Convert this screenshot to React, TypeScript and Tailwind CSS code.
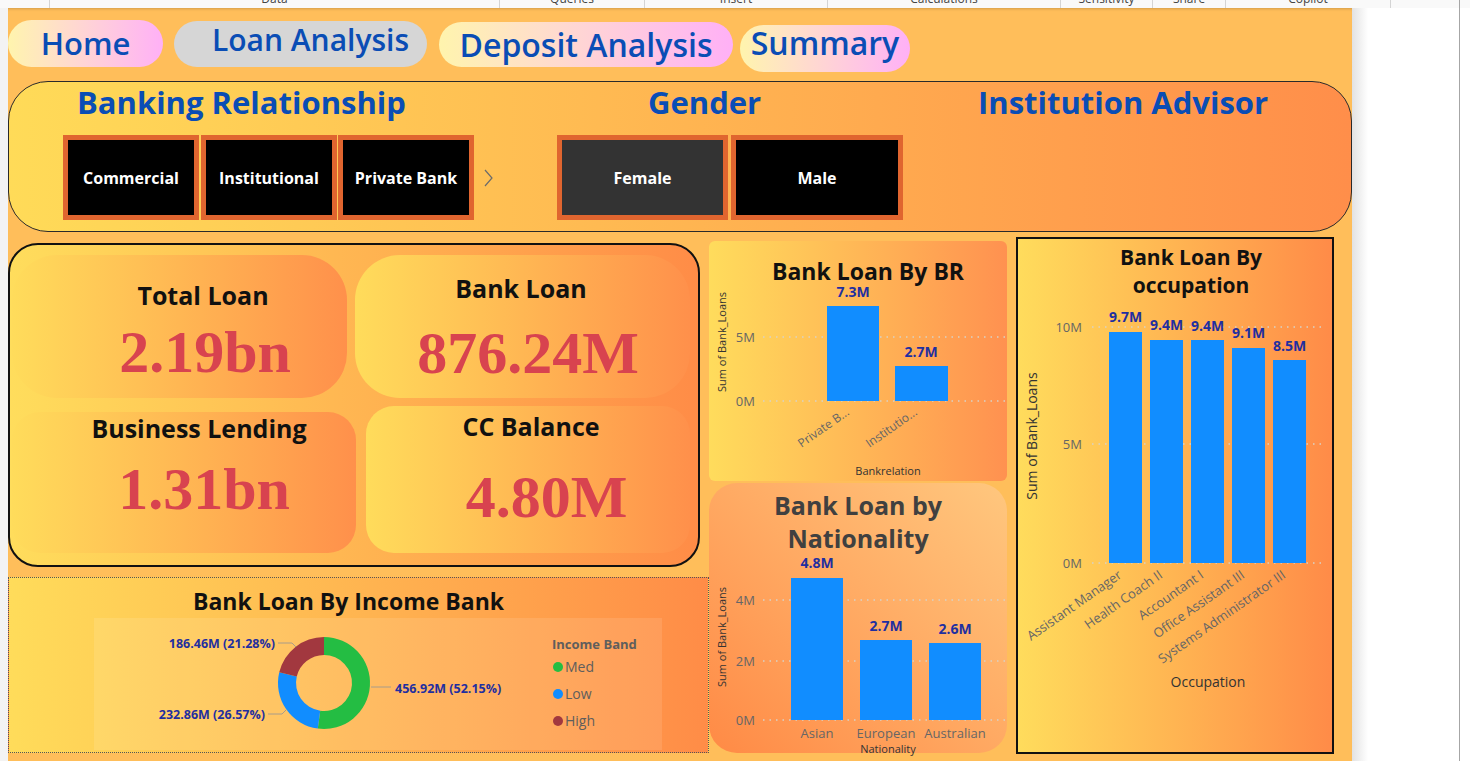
import React from "react";

const BLUE_BAR = "#118dff";
const LABEL_BLUE = "#1f2fa0";

function TopStrip() {
  return (
    <div className="h-[8px] flex bg-[#f9f9f9] overflow-hidden text-[12px] text-[#444] leading-[12px]">
      <div className="w-[50px] h-full border-r border-[#d4d4d4]" />
      <div className="w-[450px] h-full border-r border-[#d4d4d4] text-center"><div className="mt-[-7px]">Data</div></div>
      <div className="w-[145px] h-full border-r border-[#d4d4d4] text-center"><div className="mt-[-7px]">Queries</div></div>
      <div className="w-[183px] h-full border-r border-[#d4d4d4] text-center"><div className="mt-[-7px]">Insert</div></div>
      <div className="w-[233px] h-full border-r border-[#d4d4d4] text-center"><div className="mt-[-7px]">Calculations</div></div>
      <div className="w-[92px] h-full border-r border-[#d4d4d4] text-center"><div className="mt-[-7px]">Sensitivity</div></div>
      <div className="w-[73px] h-full border-r border-[#d4d4d4] text-center"><div className="mt-[-7px]">Share</div></div>
      <div className="w-[165px] h-full border-r border-[#d4d4d4] text-center"><div className="mt-[-7px]">Copilot</div></div>
      <div className="w-[69px] h-full border-r border-[#a6a6a6]" />
      <div className="flex-1 h-full" />
    </div>
  );
}

function Nav() {
  return (
    <div className="mt-[12px] h-[52px] flex items-start font-semibold text-[#0a4db5] leading-none">
      <div className="w-[155px] h-[47px] rounded-full bg-linear-to-r from-[#fff4ad] to-[#ffb0f6] flex items-center justify-center text-[31px]">
        Home
      </div>
      <div className="ml-[11px] mt-[1px] w-[253px] h-[46px] rounded-full bg-[#d6d6d6] flex items-center justify-center text-[30px] pl-[20px] pb-[8px]">
        Loan Analysis
      </div>
      <div className="ml-[12px] mt-[2px] w-[294px] h-[45px] rounded-full bg-linear-to-r from-[#fff4ad] to-[#ffb0f6] flex items-center justify-center text-[32px]">
        Deposit Analysis
      </div>
      <div className="ml-[7px] mt-[5px] w-[170px] h-[47px] rounded-full bg-linear-to-r from-[#fff4ad] to-[#ffb0f6] flex items-center justify-center text-[32px] pb-[12px]">
        Summary
      </div>
    </div>
  );
}

function Filter() {
  return (
    <div className="mt-[9px] h-[151px] rounded-[40px] border border-[#2a2a2a] bg-linear-to-r from-[#ffdb58] to-[#ff8e4a] flex flex-col">
      <div className="h-[40px] flex items-center text-[31px] font-bold text-[#0a4db5] leading-none whitespace-nowrap">
        <div className="w-[548px] pl-[68px]">Banking Relationship</div>
        <div className="w-[420px] pl-[91px]">Gender</div>
        <div className="pl-[1px]">Institution Advisor</div>
      </div>
      <div className="mt-[13px] flex items-center pl-[54px] text-white font-bold text-[16px]">
        <div className="w-[136px] h-[85px] border-[5px] border-[#e0652f] bg-black flex items-center justify-center">Commercial</div>
        <div className="ml-[2px] w-[136px] h-[85px] border-[5px] border-[#e0652f] bg-black flex items-center justify-center">Institutional</div>
        <div className="ml-[1px] w-[136px] h-[85px] border-[5px] border-[#e0652f] bg-black flex items-center justify-center">Private Bank</div>
        <svg className="ml-[9px]" width="10" height="18" viewBox="0 0 10 18">
          <polyline points="2,1 9,9 2,17" fill="none" stroke="#6b6b6b" strokeWidth="1.2" />
        </svg>
        <div className="ml-[64px] w-[171px] h-[85px] border-[5px] border-[#e0652f] bg-[#333333] flex items-center justify-center">Female</div>
        <div className="ml-[3px] w-[172px] h-[85px] border-[5px] border-[#e0652f] bg-black flex items-center justify-center">Male</div>
      </div>
    </div>
  );
}

function Kpis() {
  const val = "font-['Liberation_Serif',serif] font-bold text-[60px] leading-[60px] text-[#d8434f] whitespace-nowrap";
  const lab = "text-[25px] leading-[30px] font-bold text-[#111] whitespace-nowrap";
  return (
    <div className="mt-[6px] w-[692px] h-[324px] border-2 border-[#111] rounded-[30px] bg-linear-to-r from-[#ffdd5c] to-[#ff8c47] flex flex-col">
      <div className="mt-[10px] flex">
        <div className="ml-[2px] w-[335px] h-[143px] rounded-[45px] bg-linear-to-r from-[#ffdc5b] to-[#ff904b] flex flex-col text-center">
          <div className={`${lab} pt-[25px] pl-[47px]`}>Total Loan</div>
          <div className={`${val} mt-[12px] pl-[51px]`}>2.19bn</div>
        </div>
        <div className="ml-[8px] w-[335px] h-[143px] rounded-[45px] bg-linear-to-r from-[#ffdc5b] to-[#ff904b] flex flex-col text-center">
          <div className={`${lab} pt-[18px] pr-[3px]`}>Bank Loan</div>
          <div className={`${val} mt-[20px] pl-[11px]`}>876.24M</div>
        </div>
      </div>
      <div className="mt-[8px] flex items-start">
        <div className="ml-[2px] mt-[6px] w-[344px] h-[141px] rounded-[28px] bg-linear-to-r from-[#ffdc5b] to-[#ff904b] flex flex-col text-center">
          <div className={`${lab} pt-[1px] pl-[30px]`}>Business Lending</div>
          <div className={`${val} mt-[16px] pl-[40px]`}>1.31bn</div>
        </div>
        <div className="ml-[10px] w-[324px] h-[147px] rounded-[28px] bg-linear-to-r from-[#ffdc5b] to-[#ff904b] flex flex-col text-center">
          <div className={`${lab} pt-[5px] pl-[6px]`}>CC Balance</div>
          <div className={`${val} mt-[26px] pl-[37px]`}>4.80M</div>
        </div>
      </div>
    </div>
  );
}

function segPath(cx: number, cy: number, R: number, r: number, a0: number, a1: number) {
  const rad = (d: number) => (d * Math.PI) / 180;
  const p = (a: number, rr: number) => [cx + rr * Math.sin(rad(a)), cy - rr * Math.cos(rad(a))];
  const [x0, y0] = p(a0, R);
  const [x1, y1] = p(a1, R);
  const [x2, y2] = p(a1, r);
  const [x3, y3] = p(a0, r);
  const large = a1 - a0 > 180 ? 1 : 0;
  return `M${x0} ${y0} A${R} ${R} 0 ${large} 1 ${x1} ${y1} L${x2} ${y2} A${r} ${r} 0 ${large} 0 ${x3} ${y3} Z`;
}

function IncomeCard() {
  const cx = 230, cy = 65, R = 46, r = 28;
  return (
    <div className="mt-[10px] w-[701px] h-[176px] border border-dotted border-[#555] bg-linear-to-r from-[#ffdc5a] to-[#ff8c47] flex flex-col">
      <div className="pt-[8px] leading-[30px] text-[23px] font-bold text-[#111] text-center pr-[20px]">Bank Loan By Income Bank</div>
      <div className="ml-[85px] mt-[2px] w-[568px] h-[132px] bg-white/10">
        <svg width="568" height="132" className="block">
          <path d={segPath(cx, cy, R, r, 0, 187.74)} fill="#24bd43" />
          <path d={segPath(cx, cy, R, r, 187.74, 283.39)} fill="#118dff" />
          <path d={segPath(cx, cy, R, r, 283.39, 360)} fill="#a2383f" />
          <polyline points="184,25 198,25 202,29" fill="none" stroke="#a89c8a" strokeWidth="1" />
          <polyline points="277,69 297,69" fill="none" stroke="#a89c8a" strokeWidth="1" />
          <polyline points="174,96 188,96 192,92" fill="none" stroke="#a89c8a" strokeWidth="1" />
          <text x="181" y="29.5" textAnchor="end" fontSize="12.5" fontWeight="700" fill={LABEL_BLUE}>186.46M (21.28%)</text>
          <text x="301" y="74.5" textAnchor="start" fontSize="12.5" fontWeight="700" fill={LABEL_BLUE}>456.92M (52.15%)</text>
          <text x="171" y="100.5" textAnchor="end" fontSize="12.5" fontWeight="700" fill={LABEL_BLUE}>232.86M (26.57%)</text>
          <text x="458" y="30.5" fontSize="13" fontWeight="700" fill="#605e5c">Income Band</text>
          <circle cx="464" cy="49" r="5" fill="#24bd43" />
          <circle cx="464" cy="76" r="5" fill="#118dff" />
          <circle cx="464" cy="103" r="5" fill="#a2383f" />
          <text x="471" y="54" fontSize="14" fill="#605e5c">Med</text>
          <text x="471" y="81" fontSize="14" fill="#605e5c">Low</text>
          <text x="471" y="108" fontSize="14" fill="#605e5c">High</text>
        </svg>
      </div>
    </div>
  );
}

function BRCard() {
  return (
    <div className="mt-[4px] h-[240px] rounded-[6px] bg-linear-to-r from-[#ffdc5c] to-[#ff9150] flex flex-col">
      <div className="pt-[15px] leading-[30px] text-[23px] font-bold text-[#111] text-center pl-[20px]">Bank Loan By BR</div>
      <svg width="298" height="195" className="block overflow-visible">
        <text transform="translate(17,56) rotate(-90)" textAnchor="middle" fontSize="11" fill="#333">Sum of Bank_Loans</text>
        <line x1="54" y1="51" x2="298" y2="51" stroke="#d9d2c6" strokeWidth="1.5" strokeDasharray="1.5 5" />
        <line x1="54" y1="115" x2="298" y2="115" stroke="#d9d2c6" strokeWidth="1.5" strokeDasharray="1.5 5" />
        <text x="46" y="55.5" textAnchor="end" fontSize="13" fill="#666">5M</text>
        <text x="46" y="119.5" textAnchor="end" fontSize="13" fill="#666">0M</text>
        <rect x="118" y="20" width="52" height="95" fill={BLUE_BAR} />
        <rect x="186" y="80" width="53" height="35" fill={BLUE_BAR} />
        <text x="144" y="11" textAnchor="middle" fontSize="14" fontWeight="700" fill={LABEL_BLUE}>7.3M</text>
        <text x="212" y="71" textAnchor="middle" fontSize="14" fontWeight="700" fill={LABEL_BLUE}>2.7M</text>
        <text transform="translate(141,128) rotate(-35)" textAnchor="end" fontSize="12" fill="#666">Private B...</text>
        <text transform="translate(209,128) rotate(-35)" textAnchor="end" fontSize="12" fill="#666">Institutio...</text>
        <text x="179" y="189" textAnchor="middle" fontSize="11" fill="#333">Bankrelation</text>
      </svg>
    </div>
  );
}

function NatCard() {
  const bars = [
    { x: 82, y: 23, l: "4.8M", ly: 13, n: "Asian" },
    { x: 151, y: 85, l: "2.7M", ly: 76, n: "European" },
    { x: 220, y: 88, l: "2.6M", ly: 79, n: "Australian" },
  ];
  return (
    <div className="mt-[2px] h-[270px] rounded-[28px] bg-linear-to-tr from-[#ff8a45] to-[#ffc77e] flex flex-col">
      <div className="pt-[6px] leading-[33px] text-[25px] font-bold text-[#404040] text-center">
        Bank Loan by
        <br />
        Nationality
      </div>
      <svg width="298" height="198" className="block overflow-visible">
        <text transform="translate(17,82) rotate(-90)" textAnchor="middle" fontSize="11" fill="#333">Sum of Bank_Loans</text>
        {[45, 106, 165].map((y) => (
          <line key={y} x1="54" y1={y} x2="298" y2={y} stroke="#d9d2c6" strokeWidth="1.5" strokeDasharray="1.5 5" />
        ))}
        <text x="46" y="49.5" textAnchor="end" fontSize="13" fill="#666">4M</text>
        <text x="46" y="110.5" textAnchor="end" fontSize="13" fill="#666">2M</text>
        <text x="46" y="169.5" textAnchor="end" fontSize="13" fill="#666">0M</text>
        {bars.map((b) => (
          <g key={b.n}>
            <rect x={b.x} y={b.y} width="52" height={165 - b.y} fill={BLUE_BAR} />
            <text x={b.x + 26} y={b.ly} textAnchor="middle" fontSize="14" fontWeight="700" fill={LABEL_BLUE}>{b.l}</text>
            <text x={b.x + 26} y="182.5" textAnchor="middle" fontSize="13" fill="#666">{b.n}</text>
          </g>
        ))}
        <text x="179" y="198" textAnchor="middle" fontSize="11" fill="#333">Nationality</text>
      </svg>
    </div>
  );
}

function OccCard() {
  const bars = [
    { top: 33, l: "9.7M", ly: 23, n: "Assistant Manager" },
    { top: 41, l: "9.4M", ly: 31, n: "Health Coach II" },
    { top: 41, l: "9.4M", ly: 32, n: "Accountant I" },
    { top: 49, l: "9.1M", ly: 39, n: "Office Assistant III" },
    { top: 61, l: "8.5M", ly: 52, n: "Systems Administrator III" },
  ];
  return (
    <div className="ml-[9px] w-[318px] h-[517px] border-2 border-[#111] bg-linear-to-r from-[#ffdc5c] to-[#ff8b48] flex flex-col">
      <div className="pt-[4px] leading-[28px] text-[21px] font-bold text-[#111] text-center pl-[32px]">
        Bank Loan By
        <br />
        occupation
      </div>
      <svg width="314" height="453" className="block overflow-visible">
        <text transform="translate(19,137) rotate(-90)" textAnchor="middle" fontSize="14" fill="#333">Sum of Bank_Loans</text>
        {[28, 145, 264].map((y) => (
          <line key={y} x1="74" y1={y} x2="304" y2={y} stroke="#d9d2c6" strokeWidth="1.5" strokeDasharray="1.5 5" />
        ))}
        <text x="64" y="32.5" textAnchor="end" fontSize="13" fill="#666">10M</text>
        <text x="64" y="149.5" textAnchor="end" fontSize="13" fill="#666">5M</text>
        <text x="64" y="268.5" textAnchor="end" fontSize="13" fill="#666">0M</text>
        {bars.map((b, i) => {
          const x = 91 + i * 41;
          const cx = x + 16.5;
          return (
            <g key={b.n}>
              <rect x={x} y={b.top} width="33" height={264 - b.top} fill={BLUE_BAR} />
              <text x={cx} y={b.ly} textAnchor="middle" fontSize="14" fontWeight="700" fill={LABEL_BLUE}>{b.l}</text>
              <text transform={`translate(${cx - 3},278) rotate(-35)`} textAnchor="end" fontSize="13" fill="#666">{b.n}</text>
            </g>
          );
        })}
        <text x="190" y="388" textAnchor="middle" fontSize="14" fill="#333">Occupation</text>
      </svg>
    </div>
  );
}

function Canvas() {
  return (
    <div className="w-[1344px] h-[753px] bg-[#ffbe5a] flex flex-col overflow-hidden shadow-[inset_0_3px_3px_-2px_rgba(0,0,0,0.18)]">
      <Nav />
      <Filter />
      <div className="mt-[5px] flex items-start">
        <div className="w-[701px] flex flex-col">
          <Kpis />
          <IncomeCard />
        </div>
        <div className="w-[298px] flex flex-col">
          <BRCard />
          <NatCard />
        </div>
        <OccCard />
      </div>
    </div>
  );
}

export default function App() {
  return (
    <div className="w-[1470px] h-[761px] overflow-hidden bg-white font-['Open_Sans',sans-serif]">
      <TopStrip />
      <div className="flex h-[753px]">
        <div className="w-[8px] bg-[#f3f3f3]" />
        <Canvas />
        <div className="flex flex-1">
          <div className="w-[16px] bg-linear-to-r from-[#e2e2e2] to-white" />
          <div className="w-[91px]" />
          <div className="w-px bg-[#a6a6a6]" />
        </div>
      </div>
    </div>
  );
}
